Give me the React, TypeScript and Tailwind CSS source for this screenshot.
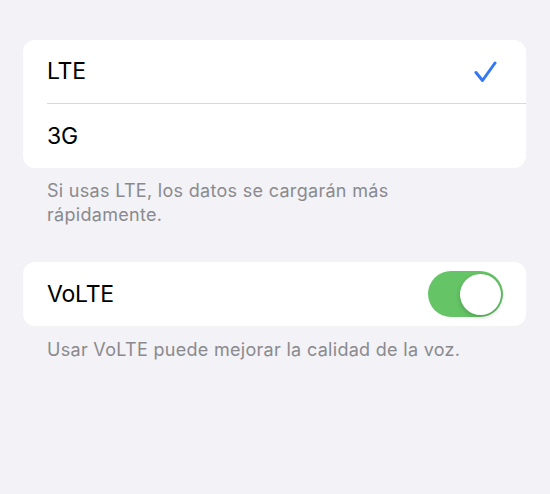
import React from "react";

export default function App() {
  return (
    <div
      className="w-[550px] h-[494px] bg-[#F2F2F7] pt-[40px] pl-[23px] pr-[24px]"
      style={{ fontFamily: "Inter, 'Noto Sans', sans-serif" }}
    >
      <div className="rounded-[12px] bg-white overflow-hidden">
        <div className="pl-[24px] h-[64px] flex">
          <div className="flex-1 flex items-center justify-between border-b border-[#D8D8DC] pr-[29px]">
            <span className="text-[23px] text-black tracking-[-0.2px]">LTE</span>
            <svg width="23" height="22" viewBox="0 0 23 22" fill="none">
              <path
                d="M2 11.5 L8.5 19.5 L21 2"
                stroke="#3478F6"
                strokeWidth="3"
                strokeLinecap="round"
                strokeLinejoin="round"
              />
            </svg>
          </div>
        </div>
        <div className="pl-[24px] h-[64px] flex items-center">
          <span className="text-[23px] text-black tracking-[-0.2px]">3G</span>
        </div>
      </div>
      <p className="pl-[24px] pt-[11px] max-w-[440px] text-[18px] tracking-[0.3px] leading-[24px] text-[#8A8A8E]">
        Si usas LTE, los datos se cargarán más rápidamente.
      </p>

      <div className="mt-[35px] rounded-[12px] bg-white h-[64px] pl-[24px] pr-[23px] flex items-center justify-between">
        <span className="text-[23px] text-black tracking-[-0.2px]">VoLTE</span>
        <div className="w-[75px] h-[46px] rounded-full bg-[#65C466] p-[2.5px] flex justify-end">
          <div className="w-[41px] h-[41px] rounded-full bg-white shadow-[0_2px_5px_rgba(0,0,0,0.2)]" />
        </div>
      </div>
      <p className="pl-[24px] pt-[12px] text-[18px] tracking-[0.3px] leading-[24px] text-[#8A8A8E]">
        Usar VoLTE puede mejorar la calidad de la voz.
      </p>
    </div>
  );
}
